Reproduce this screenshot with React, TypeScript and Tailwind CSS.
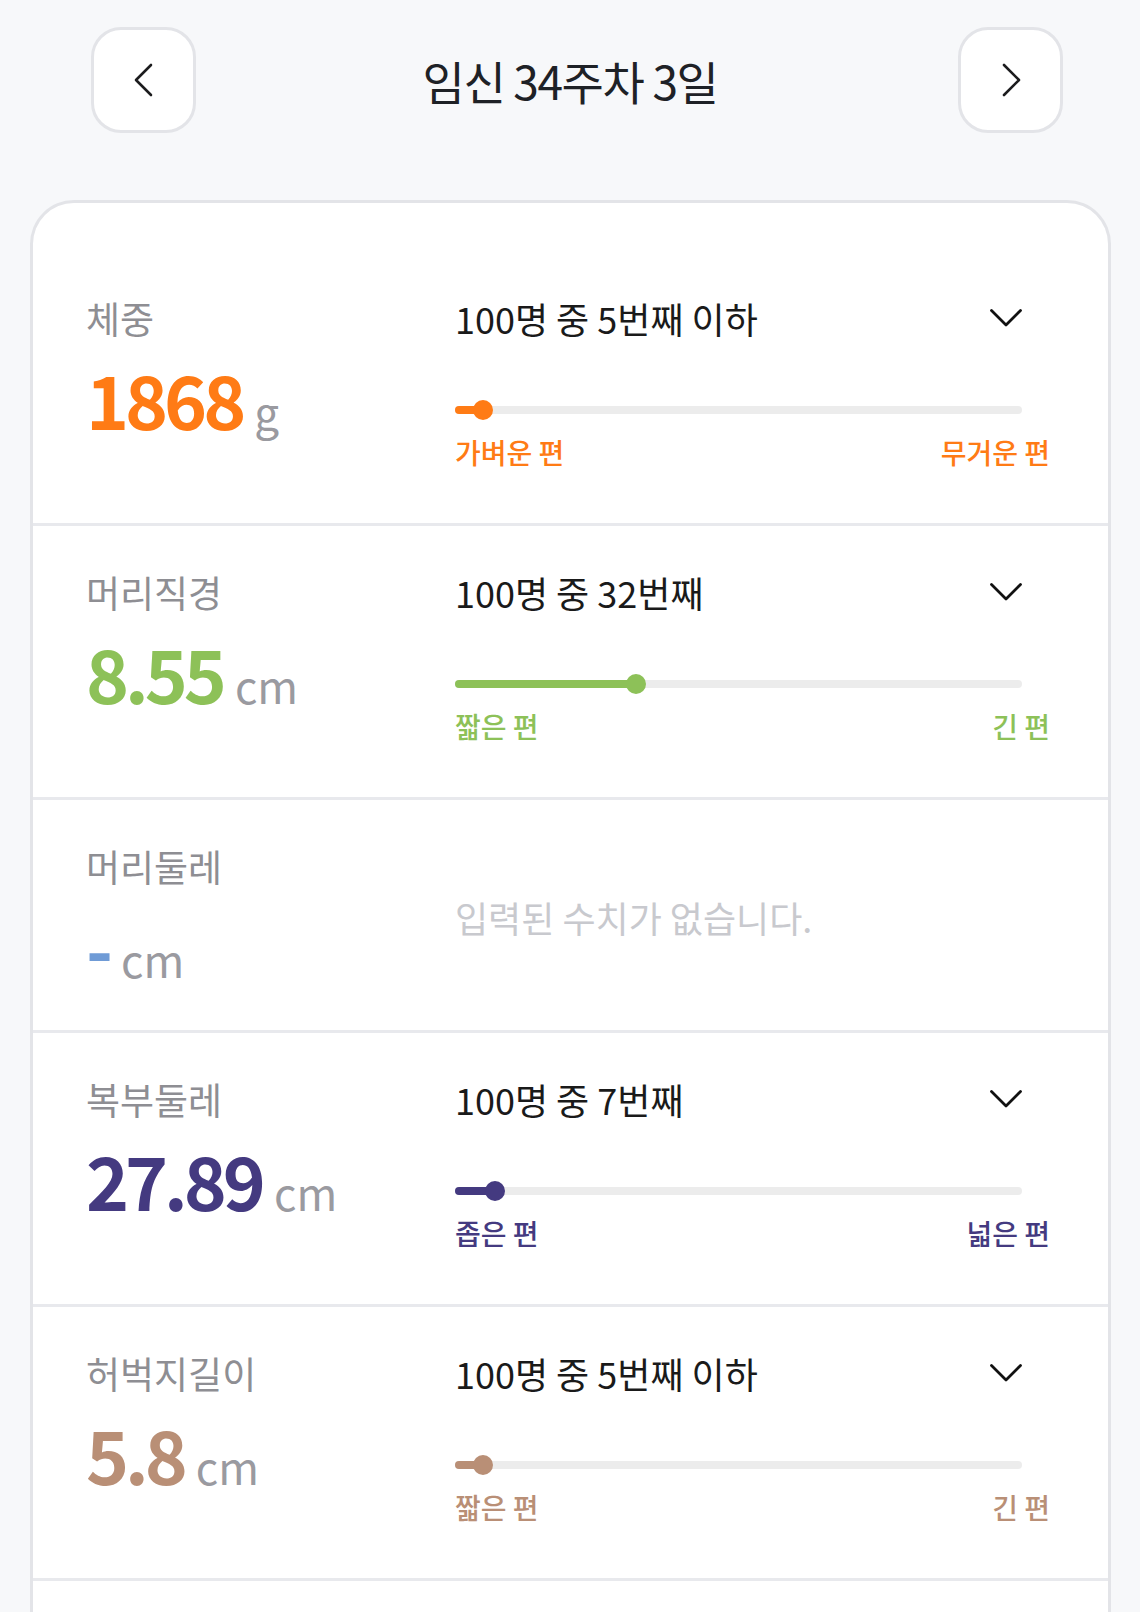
import React from "react";

type Row = {
  label: string;
  value: string;
  unit: string;
  color: string;
  fill: string;
  text?: string;
  pct?: number;
  left?: string;
  right?: string;
};

const rows: Row[] = [
  { label: "체중", value: "1868", unit: "g", color: "text-[#ff7b15]", fill: "bg-[#ff7b15]", text: "100명 중 5번째 이하", pct: 5, left: "가벼운 편", right: "무거운 편" },
  { label: "머리직경", value: "8.55", unit: "cm", color: "text-[#8dc158]", fill: "bg-[#8dc158]", text: "100명 중 32번째", pct: 32, left: "짧은 편", right: "긴 편" },
  { label: "머리둘레", value: "-", unit: "cm", color: "text-[#6f9bd6]", fill: "bg-[#6f9bd6]" },
  { label: "복부둘레", value: "27.89", unit: "cm", color: "text-[#443a80]", fill: "bg-[#443a80]", text: "100명 중 7번째", pct: 7, left: "좁은 편", right: "넓은 편" },
  { label: "허벅지길이", value: "5.8", unit: "cm", color: "text-[#b98f76]", fill: "bg-[#b98f76]", text: "100명 중 5번째 이하", pct: 5, left: "짧은 편", right: "긴 편" },
];

function ChevronLeft() {
  return (
    <svg width="22" height="36" viewBox="0 0 22 36" fill="none">
      <path d="M18 3 L3 18 L18 33" stroke="#1c1c1e" strokeWidth="2.6" strokeLinecap="round" strokeLinejoin="round" />
    </svg>
  );
}

function ChevronRight() {
  return (
    <svg width="22" height="36" viewBox="0 0 22 36" fill="none">
      <path d="M4 3 L19 18 L4 33" stroke="#1c1c1e" strokeWidth="2.6" strokeLinecap="round" strokeLinejoin="round" />
    </svg>
  );
}

function ChevronDown() {
  return (
    <svg width="34" height="20" viewBox="0 0 34 20" fill="none">
      <path d="M2.5 2.5 L17 17 L31.5 2.5" stroke="#111" strokeWidth="2.8" strokeLinecap="round" strokeLinejoin="round" />
    </svg>
  );
}

function RowView({ r }: { r: Row }) {
  return (
    <div className="grid grid-cols-[369px_595px] items-center pl-[53px] pt-[41px] pb-[44px] border-b-[3px] border-[#e8e9ed]">
      <div className="flex flex-col self-start">
        <div className="text-[37px] leading-[50px] text-[#8e8e93]">{r.label}</div>
        <div className="flex items-baseline mt-[15px] h-[80px]">
          <span className={`text-[73px] leading-[80px] font-bold tracking-[-0.055em] ${r.color}`}>{r.value}</span>
          <span className="ml-[12px] text-[44px] leading-none text-[#9a9aa0]">{r.unit}</span>
        </div>
      </div>
      {r.text ? (
        <div className="flex flex-col self-start">
          <div className="flex items-center justify-between h-[50px] pr-[27px]">
            <span className="text-[36px] leading-[50px] text-[#1a1a1a]">{r.text}</span>
            <ChevronDown />
          </div>
          <div className="relative mt-[63px] mr-[28px] h-[8px] rounded-full bg-[#ececec]">
            <div className={`absolute left-0 top-0 h-[8px] rounded-full ${r.fill}`} style={{ width: `${r.pct}%` }} />
            <div
              className={`absolute top-[-6px] w-[20px] h-[20px] rounded-full ${r.fill}`}
              style={{ left: `calc(${r.pct}% - 10px)` }}
            />
          </div>
          <div className={`flex justify-between mt-[20px] pb-[9px] text-[28px] leading-[36px] font-medium ${r.color}`}>
            <span>{r.left}</span>
            <span>{r.right}</span>
          </div>
        </div>
      ) : (
        <div className="mt-[6px] text-[36px] leading-[50px] text-[#c8c9ce]">입력된 수치가 없습니다.</div>
      )}
    </div>
  );
}

export default function App() {
  return (
    <div className="w-[1140px] h-[1612px] overflow-hidden bg-[#f7f8fa] font-['Noto_Sans_CJK_KR','Noto_Sans',sans-serif]">
      <div className="grid grid-cols-[1fr_auto_1fr] items-center pt-[27px]">
        <div className="flex justify-start pl-[91px]">
          <button className="w-[105px] h-[106px] rounded-[30px] border-[3px] border-[#e3e4e8] bg-white flex items-center justify-center">
            <ChevronLeft />
          </button>
        </div>
        <div className="text-[46px] leading-[60px] text-[#1e2126] tracking-[-0.03em]">임신 34주차 3일</div>
        <div className="flex justify-end pr-[77px]">
          <button className="w-[105px] h-[106px] rounded-[30px] border-[3px] border-[#e3e4e8] bg-white flex items-center justify-center">
            <ChevronRight />
          </button>
        </div>
      </div>

      <div className="mt-[67px] ml-[30px] mr-[29px] rounded-t-[44px] border-[3px] border-b-0 border-[#e3e4e8] bg-white pt-[49px]">
        {rows.map((r) => (
          <RowView key={r.label} r={r} />
        ))}
        <div className="h-[200px]" />
      </div>
    </div>
  );
}
